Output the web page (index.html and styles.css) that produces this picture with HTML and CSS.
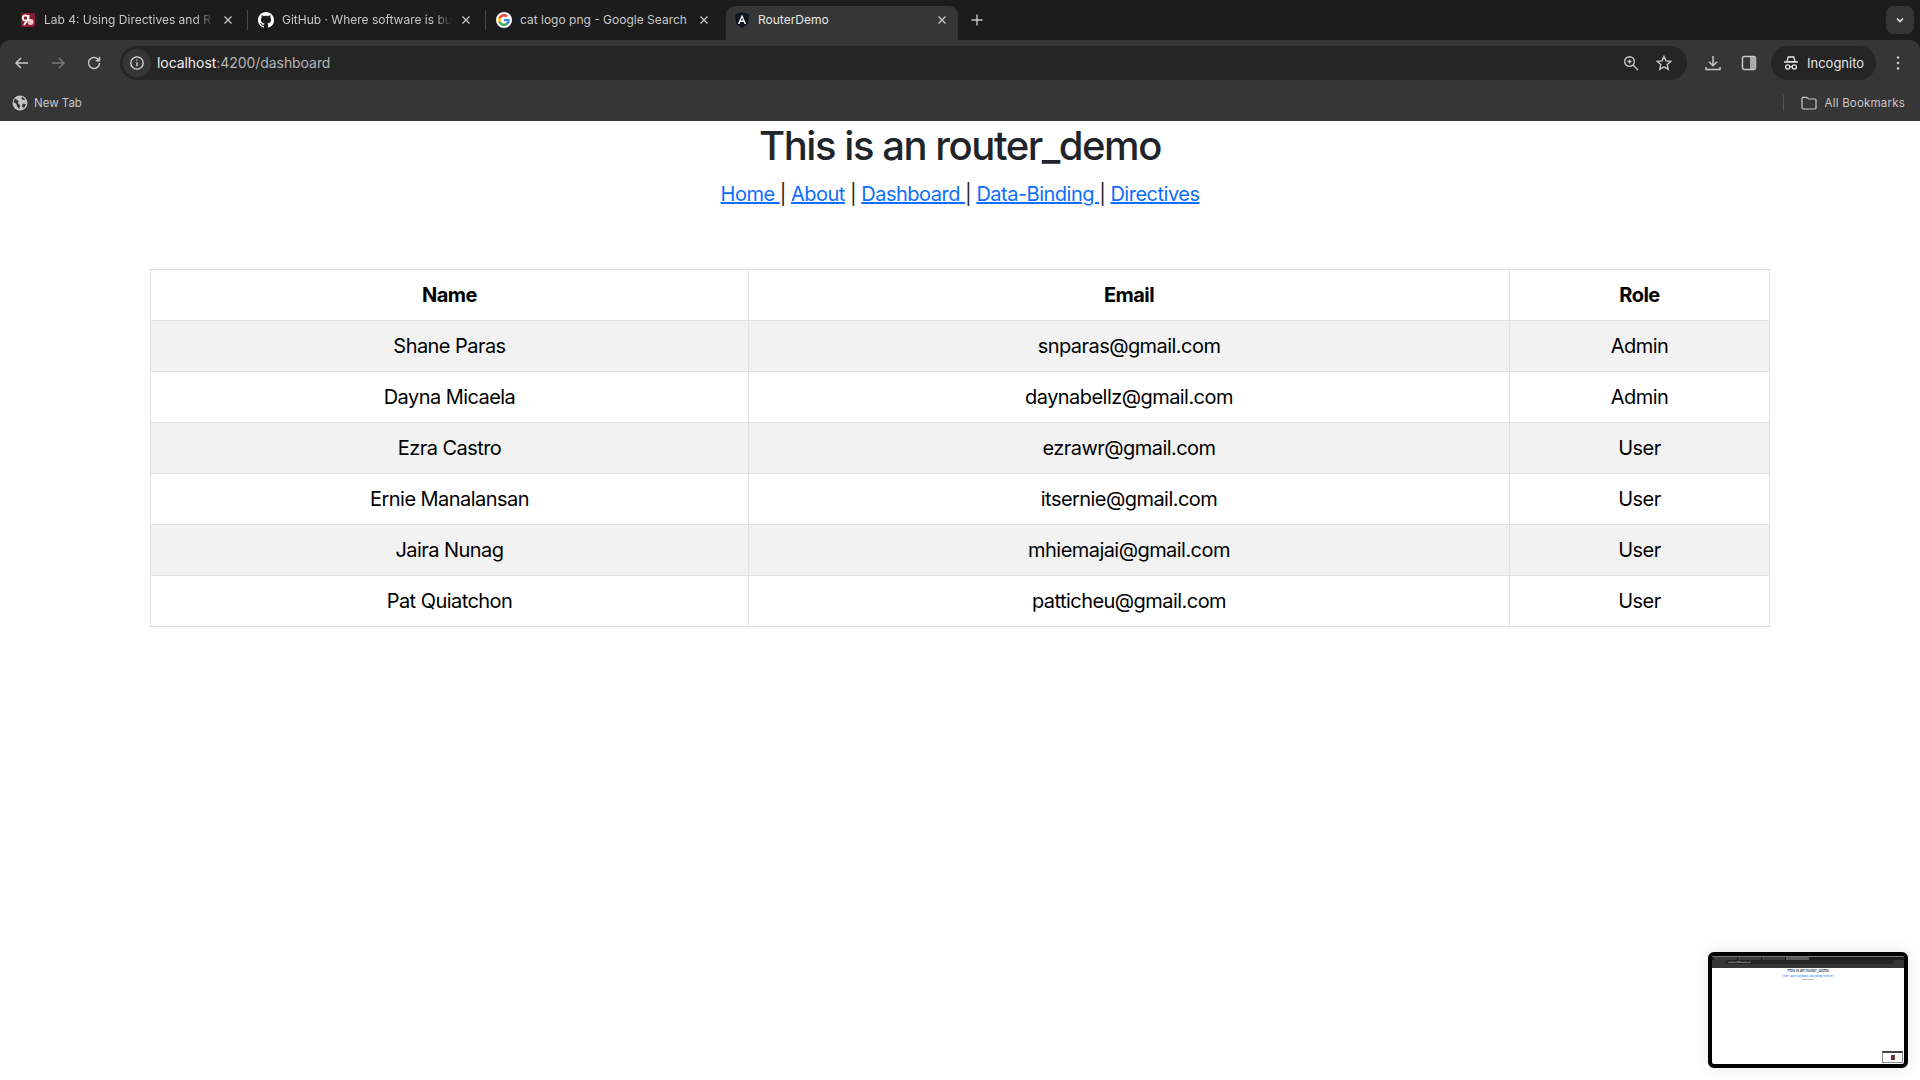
FILE: index.html
```html
<!DOCTYPE html>
<html lang="en">
<head>
  <meta charset="UTF-8" />
  <title>RouterDemo</title>
  <link rel="stylesheet" href="styles.css">
</head>
<body>
  <header class="chrome">
    <div class="tabstrip">
      <div class="tab">
        <svg class="favicon" viewBox="0 0 16 16"><rect x="1" y="1" width="14" height="14" rx="1.5" fill="#8c1d36"/><circle cx="5.5" cy="6" r="2.6" fill="none" stroke="#fff" stroke-width="1.8"/><path d="M7 8.5 4 13" stroke="#fff" stroke-width="1.8"/><circle cx="10.6" cy="10" r="3" fill="#f3c6c6"/><path d="M8.6 3v6" stroke="#fff" stroke-width="1.6"/></svg>
        <span class="tab-title">Lab 4: Using Directives and R</span>
        <svg class="tab-close" viewBox="0 0 10 10"><path d="M1.5 1.5l7 7M8.5 1.5l-7 7"/></svg>
      </div>
      <div class="tab">
        <svg class="favicon" viewBox="0 0 16 16"><path fill="#fff" d="M8 0C3.58 0 0 3.58 0 8c0 3.54 2.29 6.53 5.47 7.59.4.07.55-.17.55-.38 0-.19-.01-.82-.01-1.49-2.01.37-2.53-.49-2.69-.94-.09-.23-.48-.94-.82-1.13-.28-.15-.68-.52-.01-.53.63-.01 1.08.58 1.23.82.72 1.21 1.87.87 2.33.66.07-.52.28-.87.51-1.07-1.78-.2-3.64-.89-3.64-3.95 0-.87.31-1.59.82-2.15-.08-.2-.36-1.02.08-2.12 0 0 .67-.21 2.2.82.64-.18 1.32-.27 2-.27.68 0 1.36.09 2 .27 1.53-1.04 2.2-.82 2.2-.82.44 1.1.16 1.92.08 2.12.51.56.82 1.27.82 2.15 0 3.07-1.87 3.75-3.65 3.95.29.25.54.73.54 1.48 0 1.07-.01 1.93-.01 2.2 0 .21.15.46.55.38A8.013 8.013 0 0016 8c0-4.42-3.58-8-8-8z"/></svg>
        <span class="tab-title">GitHub · Where software is bu</span>
        <svg class="tab-close" viewBox="0 0 10 10"><path d="M1.5 1.5l7 7M8.5 1.5l-7 7"/></svg>
      </div>
      <div class="tab tab-last">
        <svg class="favicon" viewBox="0 0 24 24"><circle cx="12" cy="12" r="12" fill="#fff"/><path fill="#4285f4" d="M20.6 12.2c0-.6-.1-1.2-.2-1.8H12v3.4h4.8c-.2 1.1-.8 2-1.8 2.7v2.2h2.9c1.7-1.6 2.7-3.9 2.7-6.5z"/><path fill="#34a853" d="M12 21c2.4 0 4.5-.8 5.9-2.2L15 16.5c-.8.5-1.8.9-3 .9-2.3 0-4.3-1.6-5-3.7H4v2.3C5.5 19 8.5 21 12 21z"/><path fill="#fbbc05" d="M7 13.7c-.4-1.1-.4-2.3 0-3.4V8H4c-1.3 2.5-1.3 5.5 0 8z"/><path fill="#ea4335" d="M12 6.6c1.3 0 2.5.5 3.4 1.3L18 5.4C16.4 3.9 14.3 3 12 3 8.5 3 5.5 5 4 8l3 2.3c.7-2.1 2.7-3.7 5-3.7z"/></svg>
        <span class="tab-title tab-title-full">cat logo png - Google Search</span>
        <svg class="tab-close" viewBox="0 0 10 10"><path d="M1.5 1.5l7 7M8.5 1.5l-7 7"/></svg>
      </div>
      <div class="tab tab-active">
        <svg class="favicon" viewBox="0 0 16 16"><path fill="#10141f" d="M8 0 15 2.5 14 12 8 16 2 12 1 2.5z"/><path fill="#fff" d="M8 2.500 3.900 12h1.600l.8-2.100h3.400l.8 2.100h1.600zM6.900 8.500 8 5.700l1.100 2.800z"/></svg>
        <span class="tab-title tab-title-full">RouterDemo</span>
        <svg class="tab-close" viewBox="0 0 10 10"><path d="M1.5 1.5l7 7M8.5 1.5l-7 7"/></svg>
      </div>
      <svg class="new-tab" viewBox="0 0 12 12"><path d="M6 .5v11M.5 6h11"/></svg>
      <div class="tab-search">
        <svg viewBox="0 0 10 10"><path d="M2 3.5 5 6.5 8 3.5"/></svg>
      </div>
    </div>

    <div class="toolbar">
      <svg class="tool" viewBox="0 0 16 16"><path d="M14 8H2.500M7 3 2 8l5 5"/></svg>
      <svg class="tool tool-off" viewBox="0 0 16 16"><path d="M2 8h11.500M9 3l5 5-5 5"/></svg>
      <svg class="tool" viewBox="0 0 16 16"><path d="M13.500 8a5.500 5.500 0 1 1-1.600-3.900L13.500 5.700M13.500 1.800v3.900H9.600"/></svg>
      <div class="omnibox">
        <span class="site-info">
          <svg viewBox="0 0 16 16"><circle cx="8" cy="8" r="6.200"/><path d="M8 7.200v4M8 4.500v1.300"/></svg>
        </span>
        <span class="url">localhost<span class="url-rest">:4200/dashboard</span></span>
        <svg class="omni-icon" viewBox="0 0 16 16"><circle cx="6.500" cy="6.500" r="4.800"/><path d="M10 10l5 5M6.500 4.500v4M4.500 6.500h4"/></svg>
        <svg class="omni-icon" viewBox="0 0 16 16"><path d="M8 1.500l2 4.400 4.700.5-3.500 3.200 1 4.700L8 11.900l-4.200 2.400 1-4.700L1.300 6.400 6 5.900z"/></svg>
      </div>
      <svg class="tool tool-download" viewBox="0 0 16 16"><path d="M8 1v9.500M4 6.800l4 4 4-4M1 12v2.500h14V12"/></svg>
      <svg class="tool tool-split" viewBox="0 0 16 16"><rect x="1.500" y="1.500" width="13" height="13" rx="2"/><path class="split-fill" d="M9 2h4a1.500 1.500 0 0 1 1.500 1.500v9A1.500 1.500 0 0 1 13 14H9z"/></svg>
      <div class="profile">
        <svg viewBox="0 0 16 16"><path d="M5.200 2h5.600l1.200 4.600H4zM1 7h14"/><circle cx="4.700" cy="12" r="2.100"/><circle cx="11.300" cy="12" r="2.100"/><path d="M6.800 11.700h2.400"/></svg>
        <span>Incognito</span>
      </div>
      <svg class="tool tool-menu" viewBox="0 0 4 16"><circle cx="2" cy="2.500" r="1.300"/><circle cx="2" cy="8" r="1.300"/><circle cx="2" cy="13.500" r="1.300"/></svg>
    </div>

    <div class="bookmarks">
      <svg class="bm-icon" viewBox="0 0 16 16"><circle cx="8" cy="8" r="7.500" fill="#c4c4c4"/><path fill="#363636" d="M3 3.500 6.500 6l-.5 2.500 2 1.500-.5 4L5 11.500 4.500 9 1.500 7zM10 1.500l-.5 2.500 2 1h2zM10.500 8.500l3.500.5-2 4-2-1.500z"/></svg>
      <span class="bm-label">New Tab</span>
      <span class="bm-spacer"></span>
      <span class="bm-divider"></span>
      <svg class="bm-folder" viewBox="0 0 16 14"><path d="M1 2.500A1.200 1.200 0 0 1 2.200 1.300h3.600L7.500 3h6.300A1.200 1.200 0 0 1 15 4.200v7.600a1.200 1.200 0 0 1-1.200 1.200H2.200A1.200 1.200 0 0 1 1 11.800z"/></svg>
      <span class="bm-label bm-all">All Bookmarks</span>
    </div>
  </header>

  <main class="page">
    <h1>This is an router_demo</h1>
    <p class="nav-links"><a href="#">Home </a>| <a href="#">About</a> | <a href="#">Dashboard </a>| <a href="#">Data-Binding </a>| <a href="#">Directives</a></p>

    <table class="users">
      <thead>
        <tr><th class="col-name">Name</th><th class="col-email">Email</th><th>Role</th></tr>
      </thead>
      <tbody>
        <tr><td>Shane Paras</td><td>snparas@gmail.com</td><td>Admin</td></tr>
        <tr><td>Dayna Micaela</td><td>daynabellz@gmail.com</td><td>Admin</td></tr>
        <tr><td>Ezra Castro</td><td>ezrawr@gmail.com</td><td>User</td></tr>
        <tr><td>Ernie Manalansan</td><td>itsernie@gmail.com</td><td>User</td></tr>
        <tr><td>Jaira Nunag</td><td>mhiemajai@gmail.com</td><td>User</td></tr>
        <tr><td>Pat Quiatchon</td><td>patticheu@gmail.com</td><td>User</td></tr>
      </tbody>
    </table>
  </main>

  <aside class="thumb">
    <div class="thumb-chrome">
      <div class="thumb-tabs"><span></span><span></span><span></span><span class="thumb-tab-on"></span></div>
      <div class="thumb-url">localhost:4200/dashboard</div>
    </div>
    <div class="thumb-page">
      <div class="thumb-title">This is an router_demo</div>
      <div class="thumb-links">Home | About | Dashboard | Data-Binding | Directives</div>
      <div class="thumb-note">about-router</div>
      <div class="thumb-mini"><span></span></div>
    </div>
  </aside>
</body>
</html>
```

FILE: styles.css
```css
* {
  box-sizing: border-box;
}
html, body {
  height: 100%;
}
body {
  margin: 0;
  font-family: Inter, "Noto Sans", sans-serif;
  background: #fff;
  overflow: hidden;
}

/* browser frame */
.chrome {
  background: #1c1c1c;
  color: #c7c7c7;
}
.tabstrip {
  height: 40px;
  display: flex;
  align-items: flex-end;
  padding-left: 10px;
}
.tab {
  width: 238px;
  height: 34px;
  display: flex;
  align-items: center;
  padding: 0 15px 7px 10px;
  position: relative;
  font-size: 12px;
}
.tab::after {
  content: "";
  position: absolute;
  right: 0;
  top: 4px;
  height: 20px;
  width: 1px;
  background: #4a4a4a;
}
.tab-last::after,
.tab-active::after {
  display: none;
}
.tab-active {
  width: 232px;
  margin-left: 2px;
  padding: 0 11px 7px 8px;
  background: #363636;
  color: #e6e6e6;
  border-radius: 9px 9px 0 0;
}
.favicon {
  width: 16px;
  height: 16px;
  flex: none;
}
.tab-title {
  flex: 1;
  margin-left: 8px;
  white-space: nowrap;
  -webkit-mask-image: linear-gradient(to right, #000 88%, transparent 98%);
  mask-image: linear-gradient(to right, #000 88%, transparent 98%);
}
.tab-title-full {
  -webkit-mask-image: none;
  mask-image: none;
}
.tab-close {
  width: 10px;
  height: 10px;
  flex: none;
  margin-left: 6px;
  fill: none;
  stroke: #c7c7c7;
  stroke-width: 1.3;
}
.new-tab {
  width: 12px;
  height: 12px;
  margin: 0 0 14px 13px;
  fill: none;
  stroke: #c7c7c7;
  stroke-width: 1.4;
}
.tab-search {
  width: 28px;
  height: 28px;
  margin: 0 6px 6px auto;
  background: #363636;
  border-radius: 8px;
  display: flex;
  align-items: center;
  justify-content: center;
}
.tab-search svg {
  width: 10px;
  height: 10px;
  fill: none;
  stroke: #e3e3e3;
  stroke-width: 1.6;
}

.toolbar {
  height: 46px;
  background: #363636;
  border-radius: 10px 10px 0 0;
  display: flex;
  align-items: center;
  padding: 6px 10px 6px 14px;
}
.tool {
  width: 16px;
  height: 16px;
  flex: none;
  fill: none;
  stroke: #c7c7c7;
  stroke-width: 1.5;
  margin-right: 20px;
}
.tool-off {
  stroke: #777;
}
.omnibox {
  width: 1567px;
  height: 34px;
  margin-left: -2px;
  background: #252525;
  border-radius: 17px;
  display: flex;
  align-items: center;
  padding: 0 15px 0 3px;
  flex: none;
}
.site-info {
  width: 28px;
  height: 28px;
  border-radius: 50%;
  background: #363636;
  display: flex;
  align-items: center;
  justify-content: center;
}
.site-info svg {
  width: 16px;
  height: 16px;
  fill: none;
  stroke: #dcdcdc;
  stroke-width: 1.3;
}
.url {
  flex: 1;
  margin-left: 6px;
  padding-bottom: 1px;
  font-size: 14px;
  letter-spacing: -0.06px;
  color: #f0f0f0;
}
.url-rest {
  color: #b4b4b4;
}
.omni-icon {
  width: 16px;
  height: 16px;
  margin-left: 17px;
  fill: none;
  stroke: #c7c7c7;
  stroke-width: 1.4;
}
.tool-download {
  margin: 0 20px 0 18px;
}
.tool-split {
  margin-right: 14px;
}
.split-fill {
  fill: #a8a8a8;
  stroke: none;
}
.profile {
  width: 105px;
  height: 34px;
  flex: none;
  background: #252525;
  border-radius: 17px;
  display: flex;
  align-items: center;
  padding-left: 12px;
  font-size: 13px;
  color: #e3e3e3;
}
.profile svg {
  width: 16px;
  height: 16px;
  margin-right: 8px;
  fill: none;
  stroke: #e3e3e3;
  stroke-width: 1.3;
}
.tool-menu {
  width: 4px;
  margin: 0 0 0 20px;
  fill: #c7c7c7;
  stroke: none;
}

.bookmarks {
  height: 35px;
  background: #363636;
  display: flex;
  align-items: center;
  padding: 0 15px 1px 12px;
}
.bm-icon {
  width: 16px;
  height: 16px;
  margin-right: 6px;
}
.bm-label {
  font-size: 11.5px;
  color: #c7c7c7;
}
.bm-all {
  letter-spacing: 0.2px;
}
.bm-spacer {
  flex: 1;
}
.bm-divider {
  width: 1px;
  height: 16px;
  background: #555;
  margin-right: 17px;
}
.bm-folder {
  width: 16px;
  height: 14px;
  margin-right: 8px;
  fill: none;
  stroke: #c7c7c7;
  stroke-width: 1.2;
}

/* page */
.page {
  text-align: center;
  padding-top: 1px;
}
.page h1 {
  margin: 0 0 9px;
  font-size: 40px;
  font-weight: 500;
  line-height: 48px;
  letter-spacing: -1.45px;
  color: #212529;
}
.nav-links {
  margin: 0 0 60px;
  font-size: 20px;
  line-height: 30px;
  letter-spacing: -0.5px;
  color: #212529;
}
.nav-links a {
  color: #0d6efd;
}
.users {
  width: 1620px;
  margin: 0 auto;
  border-collapse: collapse;
  font-size: 20px;
  line-height: 30px;
  letter-spacing: -0.55px;
  color: #000;
}
.users th,
.users td {
  border: 1px solid #dee2e6;
  padding: 10px;
  text-align: center;
}
.users th {
  font-weight: 700;
}
.users tbody tr:nth-child(odd) {
  background: #f2f2f2;
}
.col-name {
  width: 598px;
}
.col-email {
  width: 761px;
}

/* screen share preview */
.thumb {
  position: absolute;
  left: 1708px;
  top: 952px;
  width: 200px;
  height: 116px;
  background: #fff;
  border: 4px solid #000;
  border-radius: 6px;
  box-shadow: 0 0 14px rgba(0, 0, 0, 0.12);
  overflow: hidden;
  display: flex;
  flex-direction: column;
}
.thumb-chrome {
  height: 12px;
  flex: none;
  background: #363636;
  border-top: 1px solid #777;
}
.thumb-tabs {
  height: 3px;
  display: flex;
  gap: 1px;
  padding-left: 2px;
  background: #1c1c1c;
}
.thumb-tabs span {
  width: 23px;
  height: 3px;
  background: #3c3c3c;
}
.thumb-tabs .thumb-tab-on {
  background: #5a5a5a;
}
.thumb-url {
  height: 4px;
  margin: 0 10px 0 13px;
  padding-left: 3px;
  background: #252525;
  border-radius: 2px;
  font-size: 1.8px;
  line-height: 4px;
  color: #ddd;
}
.thumb-page {
  flex: 1;
  position: relative;
  text-align: center;
  color: #212529;
}
.thumb-title {
  font-size: 3.9px;
  line-height: 6px;
  font-weight: 500;
}
.thumb-links {
  font-size: 2px;
  line-height: 4px;
  color: #0d6efd;
}
.thumb-note {
  font-size: 1.6px;
  line-height: 3px;
}
.thumb-mini {
  position: absolute;
  right: 1px;
  bottom: 1px;
  width: 21px;
  height: 12px;
  border: 1px solid #888;
  border-top: 2px solid #444;
  display: flex;
  align-items: center;
  justify-content: center;
}
.thumb-mini span {
  width: 4px;
  height: 5px;
  background: #6b3a34;
}
```
